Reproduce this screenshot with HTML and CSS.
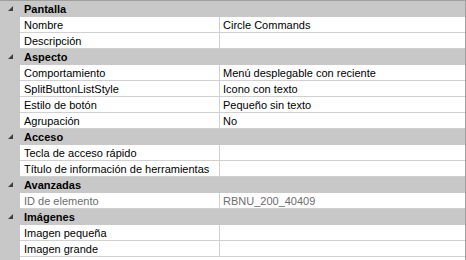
FILE: index.html
```html
<!DOCTYPE html>
<html>
<head>
<meta charset="utf-8">
<link rel="stylesheet" href="styles.css">
</head>
<body>
<div class="grid">
  <div class="cat"><span class="tog"><svg width="6" height="6" viewBox="0 0 6 6"><polygon points="5,0 5,5 0,5" fill="#404040"/></svg></span><span class="cat-label">Pantalla</span></div>
  <div class="row"><div class="name">Nombre</div><div class="val">Circle Commands</div></div>
  <div class="row"><div class="name">Descripción</div><div class="val"></div></div>

  <div class="cat"><span class="tog"><svg width="6" height="6" viewBox="0 0 6 6"><polygon points="5,0 5,5 0,5" fill="#404040"/></svg></span><span class="cat-label">Aspecto</span></div>
  <div class="row"><div class="name">Comportamiento</div><div class="val">Menú desplegable con reciente</div></div>
  <div class="row"><div class="name">SplitButtonListStyle</div><div class="val">Icono con texto</div></div>
  <div class="row"><div class="name">Estilo de botón</div><div class="val">Pequeño sin texto</div></div>
  <div class="row"><div class="name">Agrupación</div><div class="val">No</div></div>

  <div class="cat"><span class="tog"><svg width="6" height="6" viewBox="0 0 6 6"><polygon points="5,0 5,5 0,5" fill="#404040"/></svg></span><span class="cat-label">Acceso</span></div>
  <div class="row"><div class="name">Tecla de acceso rápido</div><div class="val"></div></div>
  <div class="row"><div class="name">Título de información de herramientas</div><div class="val"></div></div>

  <div class="cat"><span class="tog"><svg width="6" height="6" viewBox="0 0 6 6"><polygon points="5,0 5,5 0,5" fill="#404040"/></svg></span><span class="cat-label">Avanzadas</span></div>
  <div class="row ro"><div class="name">ID de elemento</div><div class="val">RBNU_200_40409</div></div>

  <div class="cat"><span class="tog"><svg width="6" height="6" viewBox="0 0 6 6"><polygon points="5,0 5,5 0,5" fill="#404040"/></svg></span><span class="cat-label">Imágenes</span></div>
  <div class="row"><div class="name">Imagen pequeña</div><div class="val"></div></div>
  <div class="row"><div class="name">Imagen grande</div><div class="val"></div></div>
</div>
</body>
</html>
```
FILE: styles.css
```css
html, body {
  margin: 0;
  padding: 0;
  background: #ffffff;
}
body {
  width: 466px;
  height: 260px;
  overflow: hidden;
  font-family: "Liberation Sans", Arial, sans-serif;
  font-size: 11px;
  color: #000;
}
.grid {
  width: 465px;
  height: 259px;
  border-top: 1px solid #a0a0a0;
  border-right: 1px solid #a0a0a0;
  background: linear-gradient(to right, #c8c8c8 20px, #fff 20px);
  display: flex;
  flex-direction: column;
}
.cat {
  height: 15px;
  border-bottom: 1px solid #c8c8c8;
  background: #c8c8c8;
  display: flex;
  align-items: center;
}
.tog {
  width: 20px;
  display: flex;
  justify-content: center;
  padding-left: 2px;
  padding-top: 1px;
  box-sizing: border-box;
}
.tog svg {
  display: block;
}
.cat-label {
  font-weight: bold;
  padding-left: 4px;
  padding-top: 2px;
  line-height: 15px;
  height: 15px;
}
.row {
  display: grid;
  grid-template-columns: 200px 1fr;
  margin-left: 20px;
  height: 16px;
}
.name, .val {
  height: 14px;
  padding-top: 1px;
  line-height: 15px;
  border-bottom: 1px solid #d0d0d0;
  white-space: nowrap;
  overflow: hidden;
}
.name {
  padding-left: 4px;
  border-right: 1px solid #d0d0d0;
}
.val {
  padding-left: 3px;
}
.ro .val, .ro .name {
  color: #6d6d6d;
}
```
